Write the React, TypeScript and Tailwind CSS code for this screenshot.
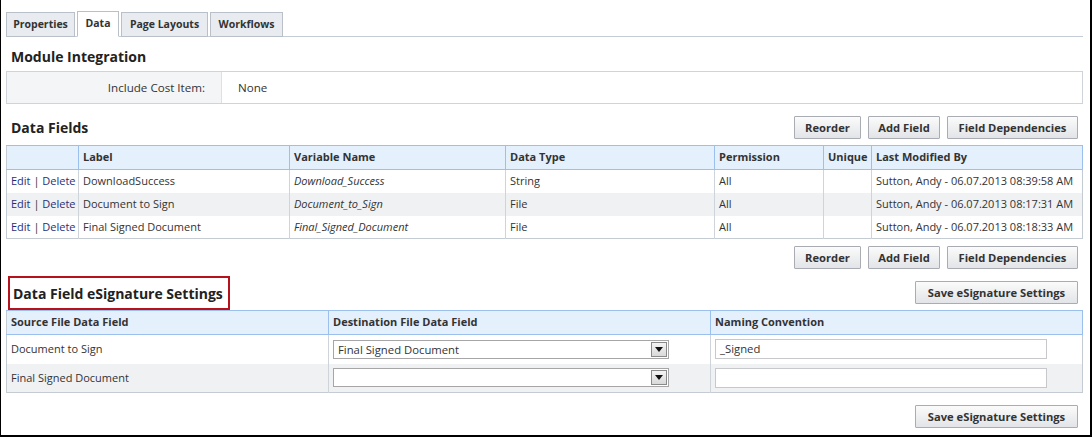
import React from 'react';

const FONT = { fontFamily: '"Open Sans", "Noto Sans", Arial, sans-serif' };

const BTN =
  'h-[23px] px-2 whitespace-nowrap border border-[#a9adb3] bg-gradient-to-b from-[#fbfbfb] to-[#e2e4e7] text-[11.2px] font-bold text-[#333] leading-none rounded-[1px]';

function Btn({ label, w }: { label: string; w: string }) {
  return <button className={`${BTN} ${w}`}>{label}</button>;
}

const FIELDS = [
  { label: 'DownloadSuccess', variable: 'Download_Success', type: 'String', perm: 'All', mod: 'Sutton, Andy - 06.07.2013 08:39:58 AM' },
  { label: 'Document to Sign', variable: 'Document_to_Sign', type: 'File', perm: 'All', mod: 'Sutton, Andy - 06.07.2013 08:17:31 AM' },
  { label: 'Final Signed Document', variable: 'Final_Signed_Document', type: 'File', perm: 'All', mod: 'Sutton, Andy - 06.07.2013 08:18:33 AM' },
];

const TH = 'border-l border-r border-[#9cc0ee] px-[4px] text-left font-bold text-[#333] whitespace-nowrap first:border-l-0';
const TD = 'border-l border-[#cfd4da] px-[4px] whitespace-nowrap first:border-l-0';
const H2 = 'text-[14px] font-bold text-[#222] whitespace-nowrap';
const TAB = 'h-[25px] -mb-px border border-[#b9c0c9] flex items-center justify-center font-bold text-[10.5px]';

function FieldButtons() {
  return (
    <div className="flex gap-[7px]">
      <Btn label="Reorder" w="w-[67px]" />
      <Btn label="Add Field" w="w-[72px]" />
      <Btn label="Field Dependencies" w="w-[131px]" />
    </div>
  );
}

function Select({ value }: { value: string }) {
  return (
    <div className="flex items-center h-[19px] w-[336px] border border-[#a6a6a6] bg-white">
      <span className="flex-1 pl-[4px] text-[11.3px] text-[#333] leading-none">{value}</span>
      <span className="w-[16px] h-[15px] mr-[1px] border border-[#8a8a8a] bg-gradient-to-b from-[#f4f4f4] to-[#d9d9d9] flex items-center justify-center">
        <svg width="8" height="5" viewBox="0 0 8 5">
          <path d="M0 0H8L4 5Z" fill="#111" />
        </svg>
      </span>
    </div>
  );
}

export default function App() {
  return (
    <div className="w-[1092px] h-[438px] bg-white text-[11.6px] text-[#333]" style={FONT}>
      <div className="h-[437px] border-l border-r-2 border-b-2 border-black pl-[5px] pr-[7px] flex flex-col">
        {/* tabs */}
        <div className="mt-[10px] flex items-end gap-[2px] border-b border-[#c4ccd6] h-[27px] w-[1077px]">
          <div className={`${TAB} w-[69px] bg-[#e8ecf0]`}>Properties</div>
          <div className={`${TAB} h-[26px] w-[42px] border-b-white bg-white`}>Data</div>
          <div className={`${TAB} w-[87px] bg-[#e8ecf0]`}>Page Layouts</div>
          <div className={`${TAB} w-[73px] bg-[#e8ecf0]`}>Workflows</div>
        </div>

        {/* module integration */}
        <h2 className={`mt-[9px] pl-[5px] h-[25px] leading-[22px] ${H2}`}>Module Integration</h2>
        <div className="flex h-[33px] w-[1077px] border border-[#cfd4da]">
          <div className="w-[215px] bg-[#f4f5f7] border-r border-[#dde1e5] flex items-center justify-end pr-[16px]">Include Cost Item:</div>
          <div className="flex items-center pl-[16px]">None</div>
        </div>

        {/* data fields */}
        <div className="mt-[11px] flex items-center justify-between w-[1077px] h-[25px] pr-[5px]">
          <h2 className={`pl-[5px] ${H2}`}>Data Fields</h2>
          <FieldButtons />
        </div>
        <table className="mt-[5px] w-[1077px] text-[11px] border border-[#c4cbd3] border-collapse table-fixed">
          <colgroup>
            <col className="w-[72px]" />
            <col className="w-[211px]" />
            <col className="w-[216px]" />
            <col className="w-[209px]" />
            <col className="w-[109px]" />
            <col className="w-[48px]" />
            <col />
          </colgroup>
          <thead>
            <tr className="h-[24px] bg-[#e5f0fd] border-t border-b border-[#9cc0ee]">
              <th className={TH}></th>
              <th className={TH}>Label</th>
              <th className={TH}>Variable Name</th>
              <th className={TH}>Data Type</th>
              <th className={TH}>Permission</th>
              <th className={TH}>Unique</th>
              <th className={TH}>Last Modified By</th>
            </tr>
          </thead>
          <tbody>
            {FIELDS.map((f, i) => (
              <tr key={f.label} className={`h-[23px] ${i === 1 ? 'bg-[#f0f1f3]' : 'bg-white'}`}>
                <td className={`${TD} pl-[4px] pr-0`}>
                  <span className="text-[#1f2f7a]">Edit</span> | <span className="text-[#1f2f7a]">Delete</span>
                </td>
                <td className={TD}>{f.label}</td>
                <td className={`${TD} italic`}>{f.variable}</td>
                <td className={TD}>{f.type}</td>
                <td className={TD}>{f.perm}</td>
                <td className={TD}></td>
                <td className={TD}>{f.mod}</td>
              </tr>
            ))}
          </tbody>
        </table>
        <div className="mt-[7px] flex justify-end w-[1077px] pr-[5px]">
          <FieldButtons />
        </div>

        {/* eSignature settings */}
        <div className="mt-[7px] flex items-end justify-between w-[1077px] pr-[5px]">
          <div className="ml-[2px] w-[222px] h-[34px] border-2 border-[#b7121c] flex items-center pl-[3px]">
            <h2 className={H2}>Data Field eSignature Settings</h2>
          </div>
          <div className="mb-[6px]">
            <Btn label="Save eSignature Settings" w="w-[163px]" />
          </div>
        </div>
        <table className="w-[1077px] text-[11px] border border-[#c4cbd3] border-collapse table-fixed">
          <colgroup>
            <col className="w-[322px]" />
            <col className="w-[382px]" />
            <col />
          </colgroup>
          <thead>
            <tr className="h-[24px] bg-[#e5f0fd] border-t border-b border-[#9cc0ee]">
              <th className={TH}>Source File Data Field</th>
              <th className={TH}>Destination File Data Field</th>
              <th className={TH}>Naming Convention</th>
            </tr>
          </thead>
          <tbody>
            <tr className="h-[29px] bg-white">
              <td className={TD}>Document to Sign</td>
              <td className={TD}>
                <Select value="Final Signed Document" />
              </td>
              <td className={TD}>
                <div className="h-[20px] w-[332px] border border-[#c6c8cc] bg-white flex items-center pl-[4px] text-[11.3px]">_Signed</div>
              </td>
            </tr>
            <tr className="h-[29px] bg-[#f0f1f3]">
              <td className={TD}>Final Signed Document</td>
              <td className={TD}>
                <Select value="" />
              </td>
              <td className={TD}>
                <div className="h-[20px] w-[332px] border border-[#c6c8cc] bg-white"></div>
              </td>
            </tr>
          </tbody>
        </table>
        <div className="mt-[12px] flex justify-end w-[1077px] pr-[5px]">
          <Btn label="Save eSignature Settings" w="w-[163px]" />
        </div>
      </div>
    </div>
  );
}
